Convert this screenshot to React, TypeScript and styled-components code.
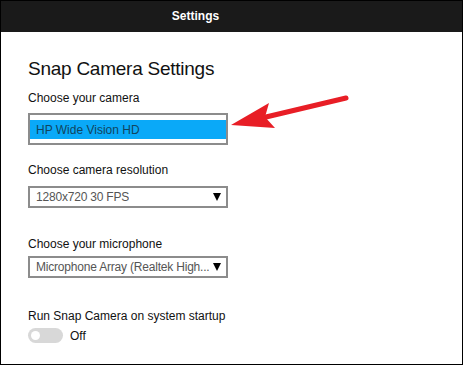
import React from 'react';
import styled, { createGlobalStyle } from 'styled-components';

const GlobalStyle = createGlobalStyle`
  html, body {
    margin: 0;
    padding: 0;
    background: #fff;
  }
  body {
    font-family: "Liberation Sans", Arial, sans-serif;
  }
`;

const Frame = styled.div`
  position: relative;
  width: 463px;
  height: 365px;
  box-sizing: border-box;
  border: 1px solid #000;
  background: #fff;
  overflow: hidden;
`;

const Header = styled.div`
  height: 31px;
  background: #1a1a1a;
  display: flex;
  align-items: center;
  justify-content: center;
  padding-right: 72px;
  padding-bottom: 1px;
  box-sizing: border-box;
  color: #fff;
  font-size: 12px;
  font-weight: bold;
`;

const Content = styled.div`
  display: flex;
  flex-direction: column;
  align-items: flex-start;
  padding: 25px 0 0 27px;
`;

const Title = styled.h1`
  margin: 0;
  font-size: 19px;
  font-weight: normal;
  letter-spacing: -0.25px;
  line-height: 24px;
  color: #111;
`;

const Label = styled.div<{ $top: number }>`
  margin-top: ${(p) => p.$top}px;
  font-size: 12px;
  line-height: 14px;
  color: #111;
`;

const ListBox = styled.div<{ $top: number }>`
  margin-top: ${(p) => p.$top}px;
  width: 200px;
  height: 32px;
  box-sizing: border-box;
  border: 2px solid #8c8c8c;
  padding: 5px 0;
  background: #fff;
`;

const Option = styled.div`
  height: 19px;
  display: flex;
  align-items: center;
  padding-left: 6px;
  background: #0aa9f8;
  color: #11455e;
  font-size: 12px;
`;

const Select = styled.div<{ $top: number }>`
  margin-top: ${(p) => p.$top}px;
  width: 200px;
  height: 22px;
  box-sizing: border-box;
  border: 2px solid #8c8c8c;
  display: flex;
  align-items: center;
  justify-content: space-between;
  padding: 0 5px 0 6px;
  color: #555;
  font-size: 12px;
  background: #fff;
`;

const SelectText = styled.span`
  white-space: nowrap;
  overflow: hidden;
  letter-spacing: -0.2px;
`;

const Caret = styled.span`
  width: 0;
  height: 0;
  flex: none;
  border-left: 4px solid transparent;
  border-right: 4px solid transparent;
  border-top: 8px solid #000;
`;

const ToggleRow = styled.div`
  margin-top: 5px;
  display: flex;
  align-items: center;
  gap: 7px;
  font-size: 12px;
  color: #111;
`;

const Toggle = styled.div`
  width: 35px;
  height: 15px;
  border-radius: 8px;
  background: #d8d8d8;
  display: flex;
  align-items: center;
  padding-left: 3px;
  box-sizing: border-box;
`;

const Knob = styled.div`
  width: 9px;
  height: 9px;
  border-radius: 50%;
  background: #fff;
`;

const Annotation = styled.svg`
  position: absolute;
  left: -1px;
  top: -1px;
  pointer-events: none;
`;

export default function App() {
  return (
    <>
      <GlobalStyle />
      <Frame>
        <Header>Settings</Header>
        <Content>
          <Title>Snap Camera Settings</Title>
          <Label $top={10}>Choose your camera</Label>
          <ListBox $top={8}>
            <Option>HP Wide Vision HD</Option>
          </ListBox>
          <Label $top={18}>Choose camera resolution</Label>
          <Select $top={9}>
            <SelectText>1280x720 30 FPS</SelectText>
            <Caret />
          </Select>
          <Label $top={29}>Choose your microphone</Label>
          <Select $top={5}>
            <SelectText>Microphone Array (Realtek High...</SelectText>
            <Caret />
          </Select>
          <Label $top={31}>Run Snap Camera on system startup</Label>
          <ToggleRow>
            <Toggle>
              <Knob />
            </Toggle>
            Off
          </ToggleRow>
        </Content>
        <Annotation width="463" height="365" viewBox="0 0 463 365">
          <line x1="266" y1="117" x2="346" y2="98" stroke="#e81e26" strokeWidth="5" strokeLinecap="round" />
          <polygon points="231,125 269,103 265,117 275,128" fill="#e81e26" />
        </Annotation>
      </Frame>
    </>
  );
}
